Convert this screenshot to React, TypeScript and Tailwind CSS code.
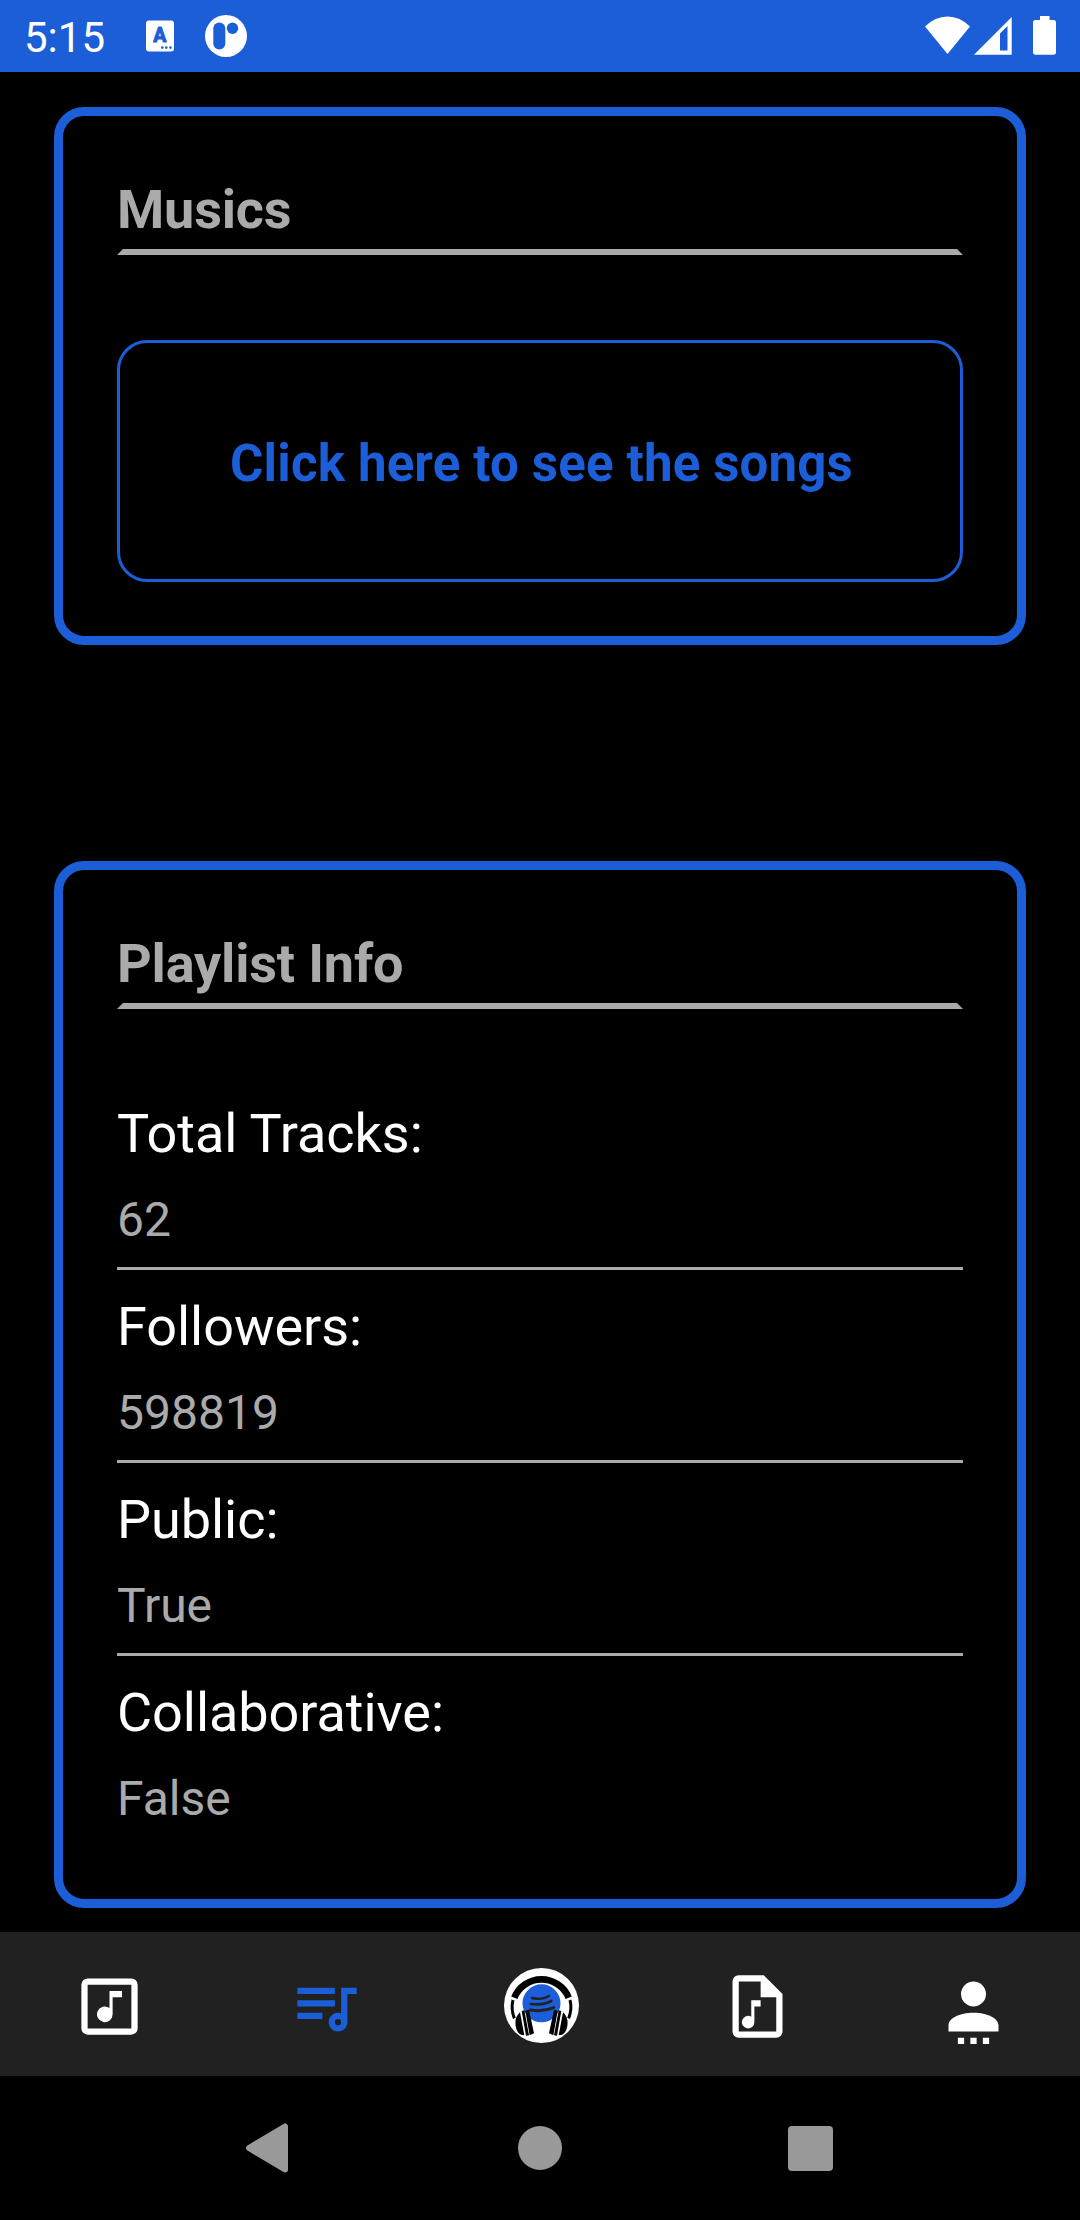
import type { ReactNode } from "react";

const info = [
  { label: "Total Tracks:", value: "62" },
  { label: "Followers:", value: "598819" },
  { label: "Public:", value: "True" },
  { label: "Collaborative:", value: "False" },
];

function StatusBar() {
  return (
    <header className="flex h-[72px] shrink-0 items-center bg-[#1c5ed7] px-6 text-white">
      <span className="w-[122px] pt-[3px] text-[42px] leading-[50px]">5:15</span>
      <svg className="h-[32px] w-[28px]" viewBox="0 0 28 32">
        <rect x="0" y="0.5" width="28" height="31" rx="3" fill="white" />
        <text x="13.8" y="22.3" textAnchor="middle" fontSize="19.5" fontWeight="700" fill="#1c5ed7" stroke="#1c5ed7" strokeWidth="1" strokeLinejoin="round">A</text>
        <circle cx="16.3" cy="27.6" r="1.3" fill="#1c5ed7" />
        <circle cx="20.3" cy="27.6" r="1.3" fill="#1c5ed7" />
        <circle cx="24.4" cy="27.6" r="1.3" fill="#1c5ed7" />
      </svg>
      <svg className="ml-[31px] size-[42px]" viewBox="0 0 42 42">
        <circle cx="21" cy="21" r="21" fill="white" />
        <rect x="8.3" y="7.5" width="12" height="27" rx="6" fill="#1c5ed7" />
        <circle cx="27.5" cy="13.2" r="5.7" fill="#1c5ed7" />
      </svg>
      <svg className="ml-auto h-[40px] w-[132px]" viewBox="924 16 132 40" fill="white">
        <path d="M925 26.5Q935 16.5 947.5 16.5T970 26.5L947.5 54Z" />
        <path fillRule="evenodd" d="M1011.7 17V54.7H974ZM1007.5 26L1000 33.5V50.5H1007.5Z" />
        <path d="M1040 16H1049.5V20H1053.5Q1056 20 1056 22.5V52Q1056 54.7 1053.5 54.7H1035.5Q1033 54.7 1033 52V22.5Q1033 20 1035.5 20H1040Z" />
      </svg>
    </header>
  );
}

function Card({ title, children }: { title: string; children: ReactNode }) {
  return (
    <section className="rounded-[30px] border-[9px] border-[#1c5ed7] px-[54px] pt-[62px]">
      <h2 className="border-x-[6px] border-b-[6px] border-x-transparent border-b-[#aaaaaa] pb-2 text-[54px] leading-[63px] font-bold tracking-[-0.18px] text-[#aaaaaa]">
        <span className="-ml-[6px]">{title}</span>
      </h2>
      {children}
    </section>
  );
}

function Logo() {
  return (
    <svg className="mb-[2px] size-[75px]" viewBox="72 84 225 225">
      <circle cx="184.5" cy="196.5" r="112.5" fill="white" />
      <circle cx="184.5" cy="190" r="57" fill="#1c5ed7" />
      <path d="M103 173A88 88 0 0 1 266 173" fill="none" stroke="black" strokeWidth="20" />
      <path d="M99 180Q92 207 103 235M270 180Q277 207 266 235" fill="none" stroke="black" strokeWidth="9" />
      <g fill="none" stroke="#222222" strokeLinecap="round">
        <path d="M156 174Q187 181 207 168" strokeWidth="7" />
        <path d="M152 192Q188 197 214 183" strokeWidth="8" />
        <path d="M151 210Q190 216 221 203" strokeWidth="9" />
      </g>
      <path d="M136 212L147 210L162 280L149 286ZM233 212L222 210L207 280L220 286Z" fill="black" />
      <path d="M125 213L133 211L147 286L138 287ZM244 213L236 211L222 286L231 287Z" fill="black" />
      <path d="M120 217L133 286Q112 286 107 258Q103 232 120 217ZM249 217L236 286Q257 286 262 258Q266 232 249 217Z" fill="black" />
    </svg>
  );
}

function TabIcon({ d, className }: { d: string; className: string }) {
  return (
    <svg className={`size-[75px] ${className}`} viewBox="0 0 24 24" fill="currentColor" fillRule="evenodd">
      <path d={d} />
    </svg>
  );
}

const musicBox =
  "M16 9H13V14.5A2.5 2.5 0 1 1 12 12.5V7H16ZM5 3H19A2 2 0 0 1 21 5V19A2 2 0 0 1 19 21H5A2 2 0 0 1 3 19V5A2 2 0 0 1 5 3ZM5 5V19H19V5Z";
const playlist =
  "M3 6H15V8H3ZM3 10H15V12H3ZM3 14H11V16H3ZM17 6H22V8H19V17A3 3 0 1 1 17 14.18ZM16 16A1 1 0 1 0 16 18A1 1 0 1 0 16 16Z";
const fileMusic =
  "M14 2H6A2 2 0 0 0 4 4V20A2 2 0 0 0 6 22H18A2 2 0 0 0 20 20V8ZM18 20H6V4H13V9H18ZM13 10V12H11V17A2 2 0 1 1 10 15.27V10Z";
const account =
  "M12 4A4 4 0 0 1 12 12A4 4 0 0 1 12 4ZM12 14C16.42 14 20 15.79 20 18V20H4V18C4 15.79 7.58 14 12 14ZM7 22H9V24H7ZM11 22H13V24H11ZM15 22H17V24H15Z";

export default function App() {
  return (
    <div className="flex h-[2220px] w-[1080px] flex-col overflow-hidden bg-black font-['Roboto',sans-serif]">
      <StatusBar />
      <main className="flex h-[1860px] shrink-0 flex-col gap-[216px] px-[54px] pt-[35px]">
        <Card title="Musics">
          <button className="mt-[85px] mb-[54px] flex h-[242px] w-full items-center justify-center rounded-[30px] border-[3px] border-[#1c5ed7] pt-[6px] pl-[3px] text-[51px] leading-[60px] font-bold tracking-[0.17px] text-[#1c5ed7]">
            Click here to see the songs
          </button>
        </Card>
        <Card title="Playlist Info">
          <dl className="mt-[68px] mb-[53px]">
            {info.map((item) => (
              <div key={item.label} className="h-[193px] border-b-[3px] border-[#aaaaaa] pt-[25px] last:h-[190px] last:border-b-0">
                <dt className="text-[54px] leading-[63px] tracking-[-0.05px] text-white">{item.label}</dt>
                <dd className="mt-[27px] text-[48px] leading-[56px] text-[#aaaaaa]">{item.value}</dd>
              </div>
            ))}
          </dl>
        </Card>
      </main>
      <nav className="grid h-[144px] shrink-0 grid-cols-[repeat(5,216px)] items-center justify-items-center bg-[#212121] pt-[5px] pl-[1.5px]">
        <TabIcon d={musicBox} className="text-white" />
        <TabIcon d={playlist} className="text-[#1c5ed7]" />
        <Logo />
        <TabIcon d={fileMusic} className="text-white" />
        <TabIcon d={account} className="text-white" />
      </nav>
      <footer className="flex h-[144px] shrink-0 items-center pl-[246px]">
        <svg className="h-[50px] w-[42px]" viewBox="0 0 42 50">
          <path d="M3 25L39 3.5V46.5Z" fill="#999999" stroke="#999999" strokeWidth="6" strokeLinejoin="round" />
        </svg>
        <span className="ml-[230px] size-[44px] rounded-full bg-[#999999]" />
        <span className="ml-[226px] size-[45px] rounded-[4px] bg-[#999999]" />
      </footer>
    </div>
  );
}
